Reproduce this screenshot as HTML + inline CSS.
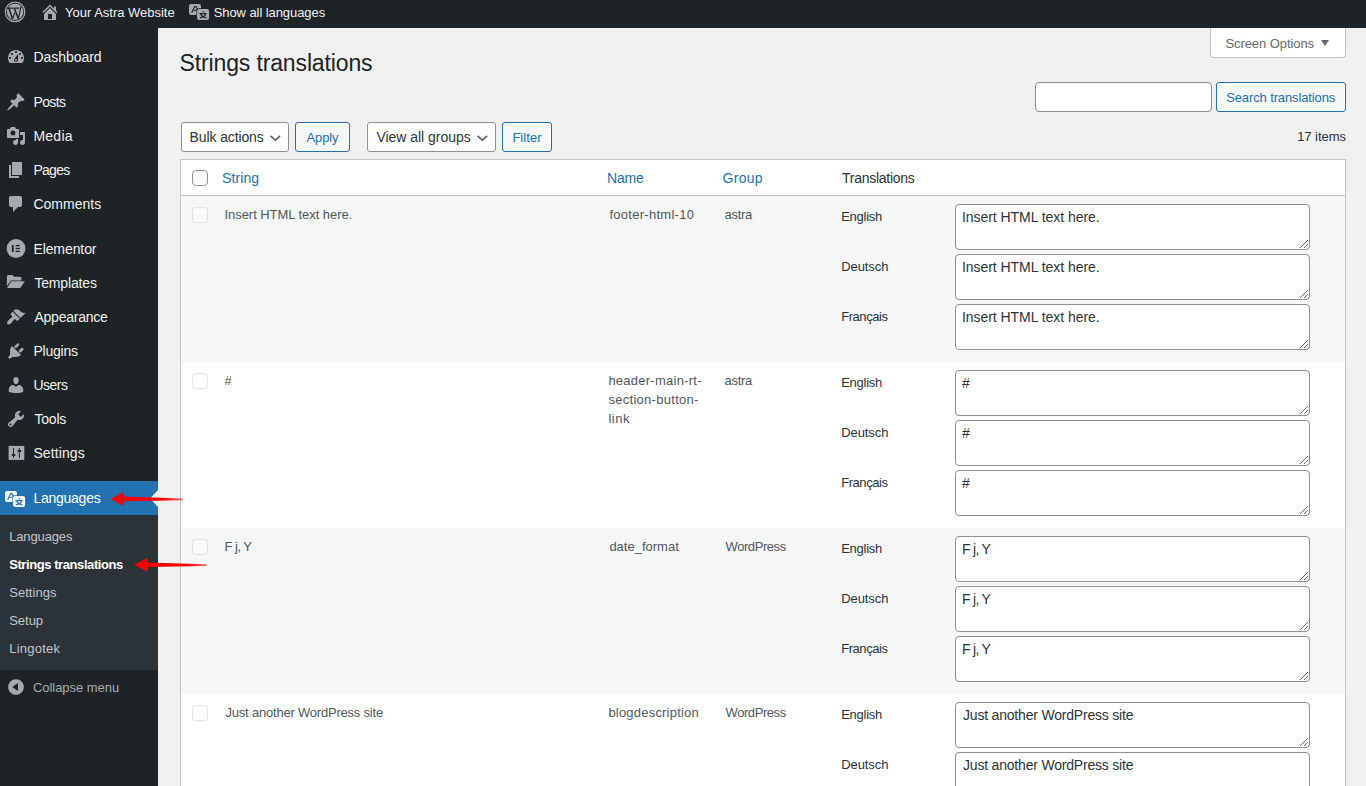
<!DOCTYPE html><html><head><meta charset="utf-8"><style>*{box-sizing:border-box}
html,body{margin:0;padding:0}
body{width:1366px;height:786px;overflow:hidden;position:relative;background:#f0f0f1;font-family:"Liberation Sans",sans-serif;font-size:13px;color:#2c3338}
.a{position:absolute}
.t{position:absolute;white-space:nowrap;line-height:1}
#bar{left:0;top:0;width:1366px;height:28px;background:#1d2327}
#side{left:0;top:28px;width:158px;height:758px;background:#1d2327}
.bt{color:#f0f0f1}
.mi{color:#f0f0f1}
.sub{color:#c3c4c7}
.ic{position:absolute;fill:#a7aaad}
.btn{position:absolute;border:1px solid #2271b1;background:#f6f7f7;border-radius:3px;height:30px}
.sel{position:absolute;border:1px solid #8c8f94;background:#fff;border-radius:3px;height:30px}
.hd{color:#2271b1}
.cb{position:absolute;width:16px;height:16px;border:1px solid #8c8f94;border-radius:4px;background:#fff}
.cbd{position:absolute;width:16px;height:16px;border:1px solid rgba(220,220,222,.75);border-radius:4px;background:rgba(255,255,255,.5)}
.row{position:absolute;left:181px;width:1164px;height:166px}
.odd{background:#f6f7f7}
.ev{background:#fff}
.rt{color:#50575e}
.lb{color:#2c3338}
.ta{position:absolute;left:955px;width:355px;height:46px;border:1px solid #8c8f94;border-radius:4px;background:#fff}
</style></head><body>
<div class="a" id="bar"></div>
<svg class="a" style="left:0;top:0" width="30" height="26" viewBox="0 0 30 26"><circle cx="15.05" cy="11.9" r="9.75" stroke="#a7aaad" stroke-width="1.25" fill="none"/><circle cx="15.05" cy="11.9" r="8.2" fill="#a7aaad"/><path d="M6.8 8.1H13.4M14.4 8.1H19.2" stroke="#1d2327" stroke-width="1.1"/><path d="M8.9 8L12.5 19M14.2 8L18.5 19" stroke="#1d2327" stroke-width="1.5"/><path d="M20.9 6.6L18.4 18.6M12.5 19L14.8 12.6" stroke="#1d2327" stroke-width="1.1"/></svg>
<svg class="a" style="left:39.7px;top:1.5px" width="20" height="20" viewBox="0 0 20 20"><path fill="#a7aaad" d="M16 8.5l1.53 1.53-1.06 1.06L10 4.62l-6.47 6.47-1.06-1.06L10 2.5l4 4v-2h2v4zm-6-2.46l6 5.99V18H4v-5.97zM12 17v-5H8v5h4z"/></svg>
<svg class="a" style="left:188.5px;top:3.8px" width="22" height="18" viewBox="0 0 22 18"><rect x="0" y="0" width="12" height="11" rx="2.2" fill="#a7aaad"/><path d="M2.7 8.7L5.5 2.7Q6.2 1.9 7 2.7L8.6 5.6M3.6 6.2H8.6" stroke="#1d2327" stroke-width="1.15" fill="none"/><rect x="7.4" y="4.2" width="13.4" height="12.6" rx="2.8" fill="#1d2327"/><rect x="8.1" y="4.9" width="12" height="11.1" rx="2.2" fill="#a7aaad"/><path d="M14.2 7V8.3M10.6 9.6H17.6M11.6 10Q12.7 12.9 17.6 13.9M16.7 10Q15.6 12.9 10.9 13.9" stroke="#1d2327" stroke-width="1.15" fill="none"/></svg>
<div class="t bt" style="left:65.1px;top:6.00px;font-size:13px;letter-spacing:-0.018px;">Your Astra Website</div>
<div class="t bt" style="left:213.7px;top:6.00px;font-size:13px;letter-spacing:-0.076px;">Show all languages</div>
<div class="a" id="side"></div>
<div class="t mi" style="left:33.4px;top:50.15px;font-size:14px;letter-spacing:-0.037px;">Dashboard</div>
<div class="t mi" style="left:33.4px;top:95.15px;font-size:14px;letter-spacing:-0.575px;">Posts</div>
<div class="t mi" style="left:33.4px;top:129.15px;font-size:14px;letter-spacing:0.25px;">Media</div>
<div class="t mi" style="left:33.4px;top:163.15px;font-size:14px;letter-spacing:-0.7px;">Pages</div>
<div class="t mi" style="left:33.4px;top:197.15px;font-size:14px;letter-spacing:0.029px;">Comments</div>
<div class="t mi" style="left:33.4px;top:242.15px;font-size:14px;letter-spacing:-0.088px;">Elementor</div>
<div class="t mi" style="left:34.4px;top:276.15px;font-size:14px;letter-spacing:-0.162px;">Templates</div>
<div class="t mi" style="left:34.4px;top:310.15px;font-size:14px;letter-spacing:-0.222px;">Appearance</div>
<div class="t mi" style="left:33.4px;top:344.15px;font-size:14px;letter-spacing:-0.2px;">Plugins</div>
<div class="t mi" style="left:33.4px;top:378.15px;font-size:14px;letter-spacing:-0.5px;">Users</div>
<div class="t mi" style="left:34.4px;top:412.15px;font-size:14px;letter-spacing:-0.175px;">Tools</div>
<div class="t mi" style="left:33.4px;top:446.15px;font-size:14px;letter-spacing:0.1px;">Settings</div>
<div class="a" style="left:0;top:481px;width:158px;height:34px;background:#2271b1"></div>
<svg class="a" style="left:150px;top:490px" width="8" height="17"><path d="M8 0 L0 8.5 L8 17Z" fill="#f0f0f1"/></svg>
<div class="t mi" style="left:33.4px;top:491.15px;font-size:14px;letter-spacing:-0.25px;color:#fff;">Languages</div>
<div class="a" style="left:0;top:515px;width:158px;height:155px;background:#2c3338"></div>
<div class="t sub" style="left:9.2px;top:530.00px;font-size:13px;letter-spacing:-0.138px;">Languages</div>
<div class="t sub" style="left:9.2px;top:558.00px;font-size:13px;letter-spacing:-0.421px;font-weight:700;color:#fff">Strings translations</div>
<div class="t sub" style="left:9.2px;top:586.00px;font-size:13px;letter-spacing:0.043px;">Settings</div>
<div class="t sub" style="left:9.2px;top:614.00px;font-size:13px;letter-spacing:-0.025px;">Setup</div>
<div class="t sub" style="left:9.2px;top:642.00px;font-size:13px;letter-spacing:0.229px;">Lingotek</div>
<div class="t sub" style="left:32.9px;top:681.00px;font-size:13px;letter-spacing:-0.033px;color:#a7aaad;">Collapse menu</div>
<svg class="a" style="left:5.5px;top:47px" width="20" height="20" viewBox="0 0 20 20"><path fill="#a7aaad" d="M3.76 16h12.48C17.34 14.63 18 12.89 18 11c0-4.42-3.58-8-8-8s-8 3.58-8 8c0 1.89.66 3.63 1.76 5zM10 4c.55 0 1 .45 1 1s-.45 1-1 1-1-.45-1-1 .45-1 1-1zM6 6c.55 0 1 .45 1 1s-.45 1-1 1-1-.45-1-1 .45-1 1-1zm8 0c.55 0 1 .45 1 1s-.45 1-1 1-1-.45-1-1 .45-1 1-1zm-5.37 5.55L12 7v6c0 1.1-.9 2-2 2s-2-.9-2-2c0-.57.24-1.08.63-1.45zM4 10c.55 0 1 .45 1 1s-.45 1-1 1-1-.45-1-1 .45-1 1-1zm12 0c.55 0 1 .45 1 1s-.45 1-1 1-1-.45-1-1 .45-1 1-1zm-5 3c0-.55-.45-1-1-1s-1 .45-1 1 .45 1 1 1 1-.45 1-1z"/></svg>
<svg class="a" style="left:5.5px;top:92px" width="20" height="20" viewBox="0 0 20 20"><path fill="#a7aaad" d="M10.44 3.02l1.82-1.82 6.36 6.35-1.83 1.82c-1.05-.68-2.48-.57-3.41.36l-.75.75c-.92.93-1.040 2.35-.35 3.41l-1.83 1.82-2.41-2.41-2.8 2.79c-.42.42-3.38 2.71-3.8 2.29s1.86-3.39 2.28-3.81l2.79-2.79L4.1 9.36l1.83-1.82c1.05.69 2.48.57 3.4-.36l.75-.75c.93-.92 1.05-2.35.36-3.41z"/></svg>
<svg class="a" style="left:5.5px;top:126px" width="20" height="20" viewBox="0 0 20 20"><path fill="#a7aaad" d="M13 11V4c0-.55-.45-1-1-1h-1.67L9 1H5L3.67 3H2c-.55 0-1 .45-1 1v7c0 .55.45 1 1 1h10c.55 0 1-.45 1-1zM7 4.5c1.38 0 2.5 1.12 2.5 2.5S8.38 9.5 7 9.5 4.5 8.38 4.5 7 5.62 4.5 7 4.5zM14 6h5v10.5c0 1.38-1.12 2.5-2.5 2.5S14 17.88 14 16.5s1.12-2.5 2.5-2.5c.17 0 .34.02.5.05V9h-3V6zm-4 8.05V13h2v3.5c0 1.38-1.12 2.5-2.5 2.5S7 17.88 7 16.5 8.12 14 9.5 14c.17 0 .34.02.5.05z"/></svg>
<svg class="a" style="left:5.5px;top:160px" width="20" height="20" viewBox="0 0 20 20"><path fill="#a7aaad" d="M6 15V2h10v13H6zm-1 1h8v2H3V5h2v11z"/></svg>
<svg class="a" style="left:5.5px;top:194px" width="20" height="20" viewBox="0 0 20 20"><path fill="#a7aaad" d="M5 2h9c1.1 0 2 .9 2 2v7c0 1.1-.9 2-2 2h-2l-5 5v-5H5c-1.1 0-2-.9-2-2V4c0-1.1.9-2 2-2z"/></svg>
<svg class="a" style="left:5.5px;top:307px" width="20" height="20" viewBox="0 0 20 20"><path fill="#a7aaad" d="M14.48 11.06L7.41 3.99l1.5-1.5c.5-.56 2.3-.47 3.51.32 1.21.8 1.43 1.28 2.91 2.1 1.18.64 2.45 1.26 4.45.85zm-.71.71L6.7 4.7 4.93 6.470c-.39.39-.39 1.02 0 1.41l1.06 1.06c.39.39.39 1.03 0 1.42-.6.6-1.43 1.11-2.21 1.69-.35.26-.7.53-1.01.84C1.43 14.23.4 16.08 1.4 17.07c.99 1 2.84-.03 4.18-1.36.31-.31.58-.66.85-1.02.57-.78 1.08-1.61 1.69-2.21.39-.39 1.02-.39 1.41 0l1.06 1.06c.39.39 1.02.39 1.41 0z"/></svg>
<svg class="a" style="left:5.5px;top:341px" width="20" height="20" viewBox="0 0 20 20"><path fill="#a7aaad" d="M13.11 4.36L9.87 7.6 8 5.73l3.24-3.24c.35-.34 1.05-.2 1.56.32.52.51.66 1.21.31 1.55zm-8 1.77l.91-1.12 9.01 9.01-1.19.84c-.71.71-2.63 1.16-3.82 1.16H6.14L4.9 17.26c-.59.59-1.54.59-2.120 0-.59-.58-.59-1.53 0-2.12l1.24-1.24v-3.88c0-1.13.4-3.19 1.09-3.89zm7.26 3.97l3.24-3.24c.34-.35 1.04-.21 1.55.31.52.51.66 1.21.31 1.55l-3.24 3.25z"/></svg>
<svg class="a" style="left:5.5px;top:375px" width="20" height="20" viewBox="0 0 20 20"><path fill="#a7aaad" d="M10 9.25c-2.27 0-2.73-3.44-2.73-3.44C7 4.02 7.82 2 9.97 2c2.16 0 2.98 2.02 2.71 3.81 0 0-.41 3.44-2.68 3.44zm0 2.57L12.72 10c2.39 0 4.52 2.33 4.52 4.53v2.49s-3.65 1.13-7.24 1.13c-3.65 0-7.24-1.13-7.24-1.13v-2.49c0-2.25 1.94-4.48 4.47-4.48z"/></svg>
<svg class="a" style="left:5.5px;top:409px" width="20" height="20" viewBox="0 0 20 20"><path fill="#a7aaad" d="M16.68 9.77c-1.34 1.34-3.3 1.67-4.95.99l-5.41 6.52c-.99.99-2.59.99-3.58 0s-.99-2.59 0-3.57l6.52-5.42c-.68-1.65-.35-3.61.99-4.95 1.28-1.28 3.12-1.62 4.72-1.06l-2.89 2.89 2.82 2.82 2.86-2.87c.53 1.58.18 3.39-1.08 4.65zM3.81 16.21c.4.39 1.04.39 1.43 0 .4-.4.4-1.04 0-1.43-.39-.4-1.03-.4-1.43 0-.39.39-.39 1.03 0 1.43z"/></svg>
<svg class="a" style="left:5.3px;top:490.8px" width="22" height="18" viewBox="0 0 22 18"><rect x="0" y="0" width="12" height="11" rx="2.2" fill="#ffffff"/><path d="M2.7 8.7L5.5 2.7Q6.2 1.9 7 2.7L8.6 5.6M3.6 6.2H8.6" stroke="#2271b1" stroke-width="1.15" fill="none"/><rect x="7.4" y="4.2" width="13.4" height="12.6" rx="2.8" fill="#2271b1"/><rect x="8.1" y="4.9" width="12" height="11.1" rx="2.2" fill="#ffffff"/><path d="M14.2 7V8.3M10.6 9.6H17.6M11.6 10Q12.7 12.9 17.6 13.9M16.7 10Q15.6 12.9 10.9 13.9" stroke="#2271b1" stroke-width="1.15" fill="none"/></svg>
<svg class="a" style="left:6px;top:677px" width="20" height="20" viewBox="0 0 20 20"><path fill="#a7aaad" d="M10 2.16c4.33 0 7.84 3.51 7.84 7.84S14.33 17.84 10 17.84 2.16 14.33 2.16 10 5.710 2.16 10 2.16zm2 11.72V6.12L6.18 9.97z"/></svg>
<svg class="a" style="left:0;top:440px" width="30" height="25" viewBox="0 0 30 25"><rect x="8.6" y="5.9" width="15.7" height="14" fill="#a7aaad"/><path d="M13.5 8.1V17.8M19.4 8.1V17.8" stroke="#1d2327" stroke-width="1"/><rect x="11.6" y="14" width="3.9" height="2" rx="1" fill="#1d2327"/><rect x="17.5" y="10" width="3.9" height="2" rx="1" fill="#1d2327"/></svg>
<svg class="a" style="left:0;top:236px" width="30" height="56" viewBox="0 0 30 56"><circle cx="16.05" cy="12.45" r="9.45" fill="#a7aaad"/><rect x="11.9" y="9.1" width="1.7" height="6.9" fill="#1d2327"/><rect x="15.6" y="8.9" width="4.2" height="1.35" fill="#1d2327"/><rect x="15.6" y="11.8" width="4.2" height="1.35" fill="#1d2327"/><rect x="15.6" y="14.7" width="4.2" height="1.35" fill="#1d2327"/><path d="M6.9 49.8V40.6Q6.9 39 8.5 39H12.3L14.1 40.8H20Q21.4 40.8 21.4 42.2V44.6H10.9L6.9 50.2Z" fill="#a7aaad"/><path d="M11.3 45.3H24.9L20.3 52H7.1Z" fill="#a7aaad"/></svg>
<div class="a" style="left:1210px;top:28px;width:136px;height:30px;background:#fff;border:1px solid #c3c4c7;border-top:0;border-radius:0 0 4px 4px"></div>
<div class="t " style="left:1225.4px;top:37.00px;font-size:13px;letter-spacing:-0.069px;color:#646970;">Screen Options</div>
<svg class="a" style="left:1321px;top:40px" width="8" height="6"><path d="M0 0H8L4 6Z" fill="#646970"/></svg>
<div class="t " style="left:179.5px;top:51.53px;font-size:23px;letter-spacing:-0.132px;color:#1d2327;">Strings translations</div>
<div class="a" style="left:1035px;top:82px;width:177px;height:30px;background:#fff;border:1px solid #8c8f94;border-radius:4px"></div>
<div class="btn" style="left:1216px;top:82px;width:130px"></div>
<div class="t " style="left:1226.2px;top:91.00px;font-size:13px;letter-spacing:-0.122px;color:#2271b1;">Search translations</div>
<div class="sel" style="left:181px;top:122px;width:108px"></div>
<div class="t " style="left:189.6px;top:130.15px;font-size:14px;letter-spacing:-0.118px;color:#2c3338;">Bulk actions</div>
<svg class="a" style="left:269px;top:134px" width="12" height="8"><path d="M1.6 1.9L6.35 6.3L11.1 1.9" stroke="#50575e" stroke-width="1.5" fill="none"/></svg>
<div class="btn" style="left:295px;top:122px;width:55px"></div>
<div class="t " style="left:306.5px;top:131.00px;font-size:13px;letter-spacing:-0.125px;color:#2271b1">Apply</div>
<div class="sel" style="left:367px;top:122px;width:129px"></div>
<div class="t " style="left:376.4px;top:130.15px;font-size:14px;letter-spacing:-0.021px;color:#2c3338;">View all groups</div>
<svg class="a" style="left:476px;top:134px" width="12" height="8"><path d="M1.6 1.9L6.35 6.3L11.1 1.9" stroke="#50575e" stroke-width="1.5" fill="none"/></svg>
<div class="btn" style="left:502px;top:122px;width:50px"></div>
<div class="t " style="left:512.4px;top:131.00px;font-size:13px;letter-spacing:0.04px;color:#2271b1">Filter</div>
<div class="t " style="right:20.043px;top:130.00px;font-size:13px;letter-spacing:-0.043px;color:#2c3338;">17 items</div>
<div class="a" style="left:180px;top:159px;width:1166px;height:700px;background:#fff;border:1px solid #c3c4c7"></div>
<div class="a" style="left:181px;top:195px;width:1164px;height:1px;background:#c3c4c7"></div>
<div class="cb" style="left:192px;top:170px"></div>
<div class="t hd" style="left:222px;top:171.15px;font-size:14px;letter-spacing:0.1px;">String</div>
<div class="t hd" style="left:607px;top:171.15px;font-size:14px;letter-spacing:-0.2px;">Name</div>
<div class="t hd" style="left:722.6px;top:171.15px;font-size:14px;letter-spacing:0.275px;">Group</div>
<div class="t " style="left:842px;top:171.15px;font-size:14px;letter-spacing:-0.264px;color:#2c3338;">Translations</div>
<div class="row odd" style="top:196px"></div>
<div class="cbd" style="left:192px;top:207px"></div>
<div class="t rt" style="left:224.5px;top:208.00px;font-size:13px;letter-spacing:-0.052px;">Insert HTML text here.</div>
<div class="t rt" style="left:609.4px;top:208.00px;font-size:13px;letter-spacing:0.277px;">footer-html-10</div>
<div class="t rt" style="left:724.6px;top:208.00px;font-size:13px;letter-spacing:-0.325px;">astra</div>
<div class="t lb" style="left:841.2px;top:210.00px;font-size:13px;letter-spacing:-0.267px;">English</div>
<div class="ta" style="top:204px"></div>
<div class="t lb" style="left:962px;top:210.15px;font-size:14px;letter-spacing:-0.052px;">Insert HTML text here.</div>
<svg class="a" style="left:1300px;top:240px" width="9" height="9" shape-rendering="crispEdges"><path d="M0 7h1v1h-1zM1 6h1v1h-1zM2 5h1v1h-1zM3 4h1v1h-1zM4 3h1v1h-1zM5 2h1v1h-1zM6 1h1v1h-1zM7 0h1v1h-1zM4 7h1v1h-1zM5 6h1v1h-1zM6 5h1v1h-1zM7 4h1v1h-1z" fill="#6b6f75"/></svg>
<div class="t lb" style="left:841.2px;top:260.00px;font-size:13px;letter-spacing:-0.083px;">Deutsch</div>
<div class="ta" style="top:254px"></div>
<div class="t lb" style="left:962px;top:260.15px;font-size:14px;letter-spacing:-0.052px;">Insert HTML text here.</div>
<svg class="a" style="left:1300px;top:290px" width="9" height="9" shape-rendering="crispEdges"><path d="M0 7h1v1h-1zM1 6h1v1h-1zM2 5h1v1h-1zM3 4h1v1h-1zM4 3h1v1h-1zM5 2h1v1h-1zM6 1h1v1h-1zM7 0h1v1h-1zM4 7h1v1h-1zM5 6h1v1h-1zM6 5h1v1h-1zM7 4h1v1h-1z" fill="#6b6f75"/></svg>
<div class="t lb" style="left:841.2px;top:310.00px;font-size:13px;letter-spacing:-0.443px;">Français</div>
<div class="ta" style="top:304px"></div>
<div class="t lb" style="left:962px;top:310.15px;font-size:14px;letter-spacing:-0.052px;">Insert HTML text here.</div>
<svg class="a" style="left:1300px;top:340px" width="9" height="9" shape-rendering="crispEdges"><path d="M0 7h1v1h-1zM1 6h1v1h-1zM2 5h1v1h-1zM3 4h1v1h-1zM4 3h1v1h-1zM5 2h1v1h-1zM6 1h1v1h-1zM7 0h1v1h-1zM4 7h1v1h-1zM5 6h1v1h-1zM6 5h1v1h-1zM7 4h1v1h-1z" fill="#6b6f75"/></svg>
<div class="row ev" style="top:362px"></div>
<div class="cbd" style="left:192px;top:373px"></div>
<div class="t rt" style="left:224.5px;top:374.00px;font-size:13px;letter-spacing:-0.05px;">#</div>
<div class="t rt" style="left:608.4px;top:374.00px;font-size:13px;letter-spacing:0.25px;">header-main-rt-</div>
<div class="t rt" style="left:608.4px;top:393.00px;font-size:13px;letter-spacing:0.286px;">section-button-</div>
<div class="t rt" style="left:608.4px;top:412.00px;font-size:13px;letter-spacing:0.5px;">link</div>
<div class="t rt" style="left:724.6px;top:374.00px;font-size:13px;letter-spacing:-0.325px;">astra</div>
<div class="t lb" style="left:841.2px;top:376.00px;font-size:13px;letter-spacing:-0.267px;">English</div>
<div class="ta" style="top:370px"></div>
<div class="t lb" style="left:962px;top:376.15px;font-size:14px;letter-spacing:-0.05px;">#</div>
<svg class="a" style="left:1300px;top:406px" width="9" height="9" shape-rendering="crispEdges"><path d="M0 7h1v1h-1zM1 6h1v1h-1zM2 5h1v1h-1zM3 4h1v1h-1zM4 3h1v1h-1zM5 2h1v1h-1zM6 1h1v1h-1zM7 0h1v1h-1zM4 7h1v1h-1zM5 6h1v1h-1zM6 5h1v1h-1zM7 4h1v1h-1z" fill="#6b6f75"/></svg>
<div class="t lb" style="left:841.2px;top:426.00px;font-size:13px;letter-spacing:-0.083px;">Deutsch</div>
<div class="ta" style="top:420px"></div>
<div class="t lb" style="left:962px;top:426.15px;font-size:14px;letter-spacing:-0.05px;">#</div>
<svg class="a" style="left:1300px;top:456px" width="9" height="9" shape-rendering="crispEdges"><path d="M0 7h1v1h-1zM1 6h1v1h-1zM2 5h1v1h-1zM3 4h1v1h-1zM4 3h1v1h-1zM5 2h1v1h-1zM6 1h1v1h-1zM7 0h1v1h-1zM4 7h1v1h-1zM5 6h1v1h-1zM6 5h1v1h-1zM7 4h1v1h-1z" fill="#6b6f75"/></svg>
<div class="t lb" style="left:841.2px;top:476.00px;font-size:13px;letter-spacing:-0.443px;">Français</div>
<div class="ta" style="top:470px"></div>
<div class="t lb" style="left:962px;top:476.15px;font-size:14px;letter-spacing:-0.05px;">#</div>
<svg class="a" style="left:1300px;top:506px" width="9" height="9" shape-rendering="crispEdges"><path d="M0 7h1v1h-1zM1 6h1v1h-1zM2 5h1v1h-1zM3 4h1v1h-1zM4 3h1v1h-1zM5 2h1v1h-1zM6 1h1v1h-1zM7 0h1v1h-1zM4 7h1v1h-1zM5 6h1v1h-1zM6 5h1v1h-1zM7 4h1v1h-1z" fill="#6b6f75"/></svg>
<div class="row odd" style="top:528px"></div>
<div class="cbd" style="left:192px;top:539px"></div>
<div class="t rt" style="left:224.5px;top:540.00px;font-size:13px;letter-spacing:-0.52px;">F j, Y</div>
<div class="t rt" style="left:609.4px;top:540.00px;font-size:13px;letter-spacing:0.0px;">date_format</div>
<div class="t rt" style="left:725.6px;top:540.00px;font-size:13px;letter-spacing:-0.438px;">WordPress</div>
<div class="t lb" style="left:841.2px;top:542.00px;font-size:13px;letter-spacing:-0.267px;">English</div>
<div class="ta" style="top:536px"></div>
<div class="t lb" style="left:962px;top:542.15px;font-size:14px;letter-spacing:-0.7px;">F j, Y</div>
<svg class="a" style="left:1300px;top:572px" width="9" height="9" shape-rendering="crispEdges"><path d="M0 7h1v1h-1zM1 6h1v1h-1zM2 5h1v1h-1zM3 4h1v1h-1zM4 3h1v1h-1zM5 2h1v1h-1zM6 1h1v1h-1zM7 0h1v1h-1zM4 7h1v1h-1zM5 6h1v1h-1zM6 5h1v1h-1zM7 4h1v1h-1z" fill="#6b6f75"/></svg>
<div class="t lb" style="left:841.2px;top:592.00px;font-size:13px;letter-spacing:-0.083px;">Deutsch</div>
<div class="ta" style="top:586px"></div>
<div class="t lb" style="left:962px;top:592.15px;font-size:14px;letter-spacing:-0.7px;">F j, Y</div>
<svg class="a" style="left:1300px;top:622px" width="9" height="9" shape-rendering="crispEdges"><path d="M0 7h1v1h-1zM1 6h1v1h-1zM2 5h1v1h-1zM3 4h1v1h-1zM4 3h1v1h-1zM5 2h1v1h-1zM6 1h1v1h-1zM7 0h1v1h-1zM4 7h1v1h-1zM5 6h1v1h-1zM6 5h1v1h-1zM7 4h1v1h-1z" fill="#6b6f75"/></svg>
<div class="t lb" style="left:841.2px;top:642.00px;font-size:13px;letter-spacing:-0.443px;">Français</div>
<div class="ta" style="top:636px"></div>
<div class="t lb" style="left:962px;top:642.15px;font-size:14px;letter-spacing:-0.7px;">F j, Y</div>
<svg class="a" style="left:1300px;top:672px" width="9" height="9" shape-rendering="crispEdges"><path d="M0 7h1v1h-1zM1 6h1v1h-1zM2 5h1v1h-1zM3 4h1v1h-1zM4 3h1v1h-1zM5 2h1v1h-1zM6 1h1v1h-1zM7 0h1v1h-1zM4 7h1v1h-1zM5 6h1v1h-1zM6 5h1v1h-1zM7 4h1v1h-1z" fill="#6b6f75"/></svg>
<div class="row ev" style="top:694px"></div>
<div class="cbd" style="left:192px;top:705px"></div>
<div class="t rt" style="left:225.5px;top:706.00px;font-size:13px;letter-spacing:-0.208px;">Just another WordPress site</div>
<div class="t rt" style="left:608.4px;top:706.00px;font-size:13px;letter-spacing:0.207px;">blogdescription</div>
<div class="t rt" style="left:725.6px;top:706.00px;font-size:13px;letter-spacing:-0.438px;">WordPress</div>
<div class="t lb" style="left:841.2px;top:708.00px;font-size:13px;letter-spacing:-0.267px;">English</div>
<div class="ta" style="top:702px"></div>
<div class="t lb" style="left:963px;top:708.15px;font-size:14px;letter-spacing:-0.196px;">Just another WordPress site</div>
<svg class="a" style="left:1300px;top:738px" width="9" height="9" shape-rendering="crispEdges"><path d="M0 7h1v1h-1zM1 6h1v1h-1zM2 5h1v1h-1zM3 4h1v1h-1zM4 3h1v1h-1zM5 2h1v1h-1zM6 1h1v1h-1zM7 0h1v1h-1zM4 7h1v1h-1zM5 6h1v1h-1zM6 5h1v1h-1zM7 4h1v1h-1z" fill="#6b6f75"/></svg>
<div class="t lb" style="left:841.2px;top:758.00px;font-size:13px;letter-spacing:-0.083px;">Deutsch</div>
<div class="ta" style="top:752px"></div>
<div class="t lb" style="left:963px;top:758.15px;font-size:14px;letter-spacing:-0.196px;">Just another WordPress site</div>
<svg class="a" style="left:1300px;top:788px" width="9" height="9" shape-rendering="crispEdges"><path d="M0 7h1v1h-1zM1 6h1v1h-1zM2 5h1v1h-1zM3 4h1v1h-1zM4 3h1v1h-1zM5 2h1v1h-1zM6 1h1v1h-1zM7 0h1v1h-1zM4 7h1v1h-1zM5 6h1v1h-1zM6 5h1v1h-1zM7 4h1v1h-1z" fill="#6b6f75"/></svg>
<div class="t lb" style="left:841.2px;top:808.00px;font-size:13px;letter-spacing:-0.443px;">Français</div>
<div class="ta" style="top:802px"></div>
<div class="t lb" style="left:963px;top:808.15px;font-size:14px;letter-spacing:-0.196px;">Just another WordPress site</div>
<svg class="a" style="left:1300px;top:838px" width="9" height="9" shape-rendering="crispEdges"><path d="M0 7h1v1h-1zM1 6h1v1h-1zM2 5h1v1h-1zM3 4h1v1h-1zM4 3h1v1h-1zM5 2h1v1h-1zM6 1h1v1h-1zM7 0h1v1h-1zM4 7h1v1h-1zM5 6h1v1h-1zM6 5h1v1h-1zM7 4h1v1h-1z" fill="#6b6f75"/></svg>
<svg class="a" style="left:0;top:0" width="260" height="600" viewBox="0 0 260 600"><defs><linearGradient id="fade" gradientUnits="objectBoundingBox" x1="0" y1="0" x2="1" y2="0"><stop offset="0" stop-color="#ff0000"/><stop offset="0.72" stop-color="#ff0000"/><stop offset="1" stop-color="#ff0000" stop-opacity="0.55"/></linearGradient></defs>
<path transform="translate(0 0)" d="M110.6 498.9L123.9 491.9V496.6L182.9 498.5V500.3L123.9 501.2V506Z" fill="url(#fade)"/>
<path transform="translate(23.8 65.8)" d="M110.6 498.9L123.9 491.9V496.6L182.9 498.5V500.3L123.9 501.2V506Z" fill="url(#fade)"/>
</svg>
</body></html>
